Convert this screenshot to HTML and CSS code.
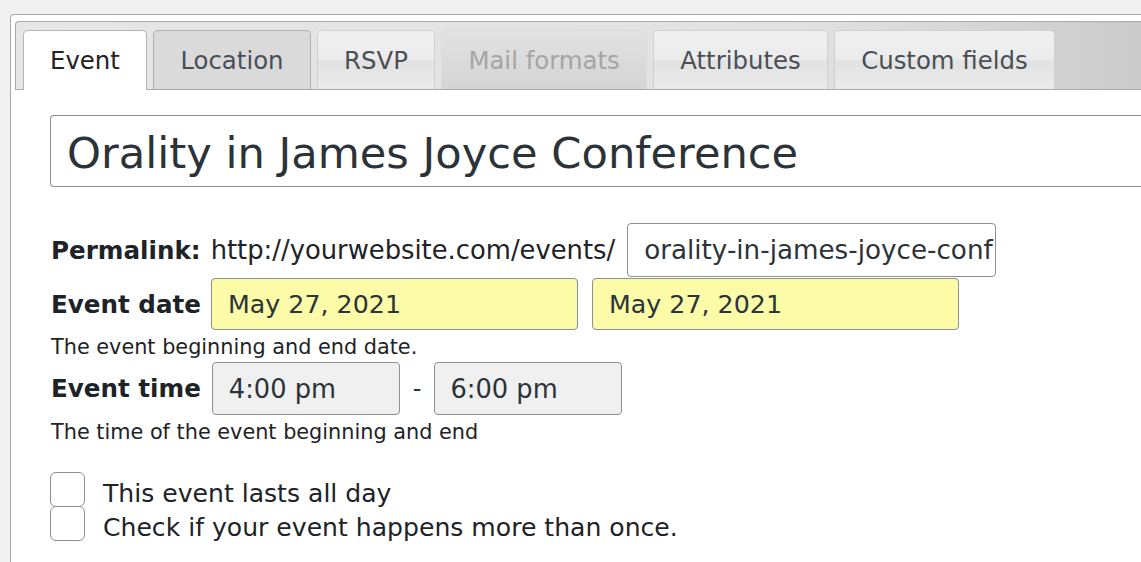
FILE: index.html
```html
<!DOCTYPE html>
<html>
<head>
<meta charset="utf-8">
<link rel="stylesheet" href="styles.css">
</head>
<body>
<div class="panel">
  <div class="tabbar">
    <div class="tab active">Event</div>
    <div class="tab tab-location">Location</div>
    <div class="tab">RSVP</div>
    <div class="tab disabled">Mail formats</div>
    <div class="tab">Attributes</div>
    <div class="tab">Custom fields</div>
  </div>
  <div class="content">
    <div class="title-input">Orality in James Joyce Conference</div>
    <div class="row permalink-row">
      <span class="label">Permalink:</span>
      <span class="url">http://yourwebsite.com/events/</span>
      <div class="field slug">orality-in-james-joyce-conf</div>
    </div>
    <div class="row date-row">
      <span class="label">Event date</span>
      <div class="field date">May 27, 2021</div>
      <div class="field date">May 27, 2021</div>
    </div>
    <p class="hint">The event beginning and end date.</p>
    <div class="row time-row">
      <span class="label">Event time</span>
      <div class="field time">4:00 pm</div>
      <span class="dash">-</span>
      <div class="field time">6:00 pm</div>
    </div>
    <p class="hint">The time of the event beginning and end</p>
    <div class="checks">
      <label class="check"><span class="box"></span><span class="check-text">This event lasts all day</span></label>
      <label class="check"><span class="box"></span><span class="check-text">Check if your event happens more than once.</span></label>
    </div>
  </div>
</div>
</body>
</html>
```
FILE: styles.css
```css
* { box-sizing: border-box; }
html, body { margin: 0; height: 100%; overflow: hidden; }
body {
  background: #f1f1f1;
  padding: 14px 0 0 10px;
  font-family: "DejaVu Sans", Verdana, sans-serif;
  color: #2c3338;
}
.panel {
  background: #fff;
  border: 1px solid #aaa;
  border-right: none;
  border-bottom: none;
  border-radius: 4px 0 0 0;
  padding: 6px 0 0 4px;
  height: 700px;
}
.tabbar {
  display: flex;
  gap: 6.5px;
  height: 69px;
  padding: 8px 0 0 7px;
  border: 1px solid #aaa;
  border-right: none;
  border-radius: 4px 0 0 0;
  background: linear-gradient(to right, #e6e6e6 0%, #e1e1e1 70%, #cbcbcb 100%);
}
.tab {
  height: 59px;
  padding: 0 26px;
  display: flex;
  align-items: center;
  font-size: 24.4px;
  color: #4a4f55;
  border: 1px solid #d0d0d0;
  border-bottom: none;
  border-radius: 5px 5px 0 0;
  background: linear-gradient(to bottom, #f0f0f0 0%, #ececec 48%, #e2e2e2 52%, #ebebeb 100%);
  margin-bottom: -1px;
  white-space: nowrap;
}
.tab.active {
  background: #fff;
  color: #222;
  border-color: #b5b5b5;
  height: 60px;
  position: relative;
  z-index: 1;
}
.tab-location {
  background: #dadada;
  border-color: #b0b0b0;
}
.tab.disabled {
  color: #a5a5a5;
  background: linear-gradient(to bottom, #e2e2e2 0%, #d4d4d4 100%);
  border-color: #dcdcdc;
}
.content {
  padding: 25px 0 0 35px;
}
.title-input {
  height: 72px;
  border: 1px solid #8c8f94;
  border-right: none;
  border-radius: 4px 0 0 4px;
  font-size: 43.2px;
  padding: 3px 0 0 16px;
  display: flex;
  align-items: center;
  color: #2c3338;
  white-space: nowrap;
  overflow: hidden;
}
.row {
  display: flex;
  align-items: center;
}
.permalink-row { margin-top: 36px; }
.label {
  font-weight: bold;
  font-size: 24.6px;
  color: #1d2327;
  margin-left: 1px;
  white-space: nowrap;
}
.url {
  font-size: 25.8px;
  color: #1d2327;
  margin-left: 10px;
  white-space: nowrap;
}
.field {
  height: 54px;
  border: 1px solid #8c8f94;
  border-radius: 4px;
  font-size: 25.3px;
  padding-left: 16px;
  display: flex;
  align-items: center;
  color: #2c3338;
  white-space: nowrap;
  overflow: hidden;
}
.slug {
  width: 369px;
  margin-left: 12px;
  background: #fff;
  padding-right: 15px;
  display: block;
  line-height: 52px;
  font-size: 26.2px;
}
.date-row { margin-top: 1px; }
.date {
  width: 367px;
  height: 52px;
  background: #fbfba8;
  margin-left: 10px;
}
.date + .date { margin-left: 14px; }
.hint {
  margin: 5px 0 0 1px;
  font-size: 20.8px;
  color: #1d2327;
  white-space: nowrap;
}
.time-row { margin-top: 3px; }
.time {
  width: 188px;
  height: 53px;
  background: #f0f0f0;
  margin-left: 11px;
  font-size: 25.7px;
}
.dash {
  font-size: 24px;
  margin: 0 12px 0 13px;
  color: #2c3338;
}
.dash + .time { margin-left: 0; }
.checks {
  margin-top: 28px;
  display: flex;
  flex-direction: column;
}
.check {
  display: flex;
  align-items: center;
  height: 34px;
}
.box {
  width: 35px;
  height: 35px;
  border: 1px solid #8c8f94;
  border-radius: 6px;
  background: #fff;
  flex: none;
}
.check-text {
  font-size: 25.1px;
  color: #1d2327;
  margin-left: 18px;
  position: relative;
  top: 4px;
  white-space: nowrap;
}
```
